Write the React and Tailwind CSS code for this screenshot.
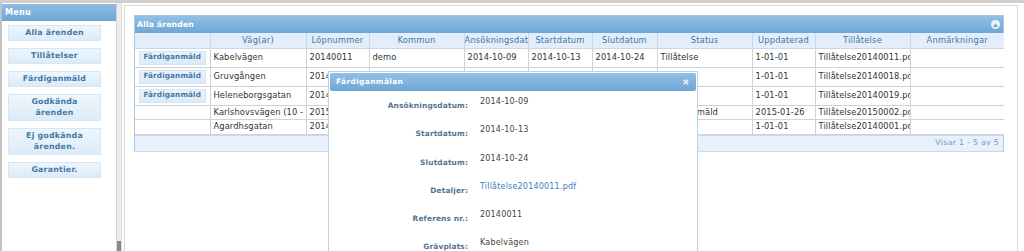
import React from "react";

const cols = [75, 96, 63, 95, 64, 64, 65, 95, 63, 95, 94];
const heads = ["", "Väg(ar)", "Löpnummer", "Kommun", "Ansökningsdatum", "Startdatum", "Slutdatum", "Status", "Uppdaterad", "Tillåtelse", "Anmärkningar"];
const rows = [
  { btn: true, h: 19, c: ["Kabelvägen", "20140011", "demo", "2014-10-09", "2014-10-13", "2014-10-24", "Tillåtelse", "1-01-01", "Tillåtelse20140011.pdf", ""] },
  { btn: true, h: 19, c: ["Gruvgången", "20140018", "demo", "2014-10-09", "2014-10-13", "2014-10-24", "Ansökan", "1-01-01", "Tillåtelse20140018.pdf", ""] },
  { btn: true, h: 19, c: ["Heleneborgsgatan", "20140019", "demo", "2014-10-09", "2014-10-13", "2014-10-24", "Ansökan", "1-01-01", "Tillåtelse20140019.pdf", ""] },
  { btn: false, h: 14, c: ["Karlshovsvägen (10 - 12)", "20150002", "demo", "2015-01-20", "2015-01-26", "2015-02-10", "Färdiganmäld", "2015-01-26", "Tillåtelse20150002.pdf", ""] },
  { btn: false, h: 15, c: ["Agardhsgatan", "20140001", "demo", "2014-09-01", "2014-09-05", "2014-09-20", "Ansökan", "1-01-01", "Tillåtelse20140001.pdf", ""] },
];

const menu = [
  { t: ["Alla ärenden"], h: "h-[16px]" },
  { t: ["Tillåtelser"], h: "h-[16px]" },
  { t: ["Färdiganmäld"], h: "h-[16px]" },
  { t: ["Godkända", "ärenden"], h: "h-[27px]" },
  { t: ["Ej godkända", "ärenden."], h: "h-[27px]" },
  { t: ["Garantier."], h: "h-[16px]" },
];

const details = [
  ["Ansökningsdatum:", "2014-10-09"],
  ["Startdatum:", "2014-10-13"],
  ["Slutdatum:", "2014-10-24"],
  ["Detaljer:", "Tillåtelse20140011.pdf", true],
  ["Referens nr.:", "20140011"],
  ["Grävplats:", "Kabelvägen"],
];

export default function App() {
  return (
    <div className="flex w-[1024px] h-[251px] overflow-hidden bg-white border-t-[3px] border-[#cfcfcf] font-['DejaVu_Sans',sans-serif]">
      {/* Sidebar */}
      <aside className="w-[117px] shrink-0 border-l-2 border-r border-l-[#c4c4c4] border-r-[#d4d4d4] bg-white pt-[1px]">
        <div className="h-[17px] bg-gradient-to-b from-[#8ebde4] to-[#6ea6d5] flex items-center pl-[3px] text-white text-[8px] font-bold tracking-[0.3px]">
          Menu
        </div>
        <div className="flex flex-col gap-[7px] mt-[4px] pl-[6px] pr-[15px]">
          {menu.map((m, i) => (
            <div
              key={i}
              className={`${m.h} flex flex-col items-center justify-center border border-[#d6e6f4] bg-gradient-to-b from-[#eef6fd] to-[#dcebf8] text-[#4479a6] text-[7.8px] font-bold leading-[10.5px] tracking-[0.25px]`}
            >
              {m.t.map((l, j) => (
                <span key={j}>{l}</span>
              ))}
            </div>
          ))}
        </div>
      </aside>
      {/* scroll strip */}
      <div className="w-[5px] shrink-0 flex flex-col bg-[#ececec] border-r border-[#dcdcdc]">
        <div className="flex-1" />
        <div className="h-[10px] bg-[#8a8a8a]" />
      </div>
      {/* Main */}
      <main className="flex-1 pl-[2px] pt-[2px] bg-white">
        <div className="relative w-[894px] h-full border-l border-t border-r border-[#d8d8d8] pl-[9px] pt-[9px]">
          <div className="w-[870px] border border-[#a9c9e3] border-b-[#c7dbec]">
            <div className="h-[17px] bg-gradient-to-b from-[#93c0e6] to-[#6ea6d5] flex items-center justify-between pl-[2px] pr-[3px]">
              <span className="text-white text-[7.8px] font-bold tracking-[0.1px]">Alla ärenden</span>
              <span className="w-[9px] h-[9px] rounded-full bg-[#e9f3fc] flex items-center justify-center">
                <svg width="5" height="4" viewBox="0 0 5 4">
                  <path d="M0 4 L2.5 0.5 L5 4 Z" fill="#6ea6d5" />
                </svg>
              </span>
            </div>
            <table className="table-fixed border-collapse w-[868px] text-[8.3px] text-[#333]">
              <colgroup>
                {cols.map((w, i) => (
                  <col key={i} style={{ width: w }} />
                ))}
              </colgroup>
              <thead>
                <tr className="h-[15px] bg-[#e3eefa]">
                  {heads.map((h, i) => (
                    <th
                      key={i}
                      className="p-0 font-normal text-[#3a77aa] tracking-[0.2px] text-center whitespace-nowrap overflow-hidden border-r border-b border-[#c5d9ec] last:border-r-0"
                    >
                      {h}
                    </th>
                  ))}
                </tr>
              </thead>
              <tbody>
                {rows.map((r, i) => (
                  <tr key={i} style={{ height: r.h }} className="bg-white">
                    <td className="p-0 border-r border-b border-[#d2d2d2] text-center">
                      {r.btn && (
                        <div className="mx-auto w-[67px] h-[14px] flex items-center justify-center bg-gradient-to-b from-[#eaf3fc] to-[#dbeaf7] border border-[#d5e5f3] text-[#4479a6] text-[7.3px] font-bold tracking-[0.1px]">
                          Färdiganmäld
                        </div>
                      )}
                    </td>
                    {r.c.map((c, j) => (
                      <td
                        key={j}
                        className="p-0 pl-[3px] border-r border-b border-[#d2d2d2] last:border-r-0 whitespace-nowrap overflow-hidden tracking-[0.1px]"
                      >
                        {c}
                      </td>
                    ))}
                  </tr>
                ))}
              </tbody>
            </table>
            <div className="h-[16px] bg-[#e6f1fb] border-t border-[#c7dbec] flex items-center justify-end pr-[4px] text-[7.8px] text-[#6e9cc4] tracking-[0.3px]">
              Visar 1 - 5 av 5
            </div>
          </div>

          {/* Dialog */}
          <div className="absolute left-[203px] top-[65px] w-[370px] h-[200px] bg-white border border-[#b9d2e8] p-[1px]">
            <div className="h-[18px] rounded-[2px] bg-gradient-to-b from-[#93c0e6] to-[#6ea6d5] flex items-center justify-between pl-[6px] pr-[7px]">
              <span className="text-white text-[7.4px] font-bold tracking-[0.4px]">Färdiganmälan</span>
              <svg width="6" height="6" viewBox="0 0 6 6">
                <path d="M0.8 0.8 L5.2 5.2 M5.2 0.8 L0.8 5.2" stroke="#eaf3fc" strokeWidth="1.6" />
              </svg>
            </div>
            <div className="pt-[5px] flex flex-col">
              {details.map(([l, v, link], i) => (
                <div key={i} className="flex h-[28.3px] items-start">
                  <div className="w-[138px] text-right pt-[4px] text-[7.4px] font-bold text-[#55748f] tracking-[0.15px]">
                    {l}
                  </div>
                  <div className={`ml-[12px] text-[8px] tracking-[0.2px] ${link ? "text-[#3f7db0]" : "text-[#444]"}`}>
                    {v}
                  </div>
                </div>
              ))}
            </div>
          </div>
        </div>
      </main>
    </div>
  );
}
